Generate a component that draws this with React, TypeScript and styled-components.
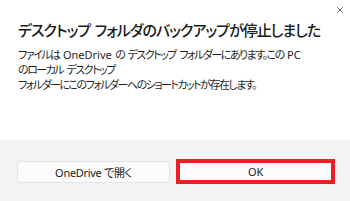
import React from "react";
import styled, { createGlobalStyle } from "styled-components";

const Global = createGlobalStyle`
  html, body { margin: 0; padding: 0; background: #ffffff; }
  body {
    font-family: "Noto Sans", "Noto Sans CJK JP", sans-serif;
    font-feature-settings: "palt";
    color: #1b1b1b;
  }
`;

const Dialog = styled.div`
  width: 350px;
  height: 201px;
  display: flex;
  flex-direction: column;
  background: #ffffff;
  overflow: hidden;
`;

const TopBar = styled.div`
  height: 20px;
  display: flex;
  justify-content: flex-end;
  align-items: flex-start;
  padding: 7px 7px 0 0;
  box-sizing: border-box;
`;

const CloseButton = styled.button`
  width: 6px;
  height: 6px;
  padding: 0;
  border: none;
  background: transparent;
  display: flex;
`;

const Content = styled.div`
  flex: 1;
  padding: 0 18px;
`;

const Title = styled.h1`
  margin: 0;
  font-family: "Noto Sans CJK JP", sans-serif;
  font-feature-settings: "palt";
  font-size: 15px;
  letter-spacing: -1px;
  word-spacing: 2px;
  line-height: 20px;
  font-weight: 500;
  color: #1a1a1a;
  white-space: nowrap;
`;

const Message = styled.p`
  margin: 7px 0 0;
  font-size: 11px;
  letter-spacing: -1.5px;
  word-spacing: 2px;
  line-height: 15px;
  font-weight: 400;
  color: #1f1f1f;
  white-space: nowrap;
`;

const Latin = styled.span`
  letter-spacing: 0;
`;

const Footer = styled.div`
  height: 61px;
  background: #f3f3f3;
  display: flex;
  gap: 6px;
  padding: 19px 15px 0 17px;
  box-sizing: border-box;
  align-items: flex-start;
`;

const Button = styled.button<{ $highlight?: boolean }>`
  flex: 1;
  height: ${(p) => (p.$highlight ? "25px" : "22px")};
  margin-top: ${(p) => (p.$highlight ? "0" : "2px")};
  box-sizing: border-box;
  border: ${(p) => (p.$highlight ? "4px solid #ee1c25" : "1px solid #e3e3e3")};
  border-radius: ${(p) => (p.$highlight ? "0" : "4px")};
  background: ${(p) => (p.$highlight ? "#fcfcfc" : "#fbfbfb")};
  font-family: "Noto Sans", "Noto Sans CJK JP", sans-serif;
  font-feature-settings: "palt";
  font-size: 11px;
  letter-spacing: -0.3px;
  color: #1b1b1b;
  padding: 0;
  display: flex;
  align-items: center;
  justify-content: center;
`;

export default function App() {
  return (
    <>
      <Global />
      <Dialog>
        <TopBar>
          <CloseButton aria-label="閉じる">
            <svg width="6" height="6" viewBox="0 0 6 6">
              <path d="M0.3 0.3 L5.7 5.7 M5.7 0.3 L0.3 5.7" stroke="#333" strokeWidth="0.8" fill="none" />
            </svg>
          </CloseButton>
        </TopBar>
        <Content>
          <Title>デスクトップ フォルダのバックアップが停止しました</Title>
          <Message>
            ファイルは <Latin>OneDrive</Latin> の デスクトップ フォルダーにあります。この <Latin>PC</Latin>
            <br />
            のローカル デスクトップ
            <br />
            フォルダーにこのフォルダーへのショートカットが存在します。
          </Message>
        </Content>
        <Footer>
          <Button>OneDrive で開く</Button>
          <Button $highlight>OK</Button>
        </Footer>
      </Dialog>
    </>
  );
}
